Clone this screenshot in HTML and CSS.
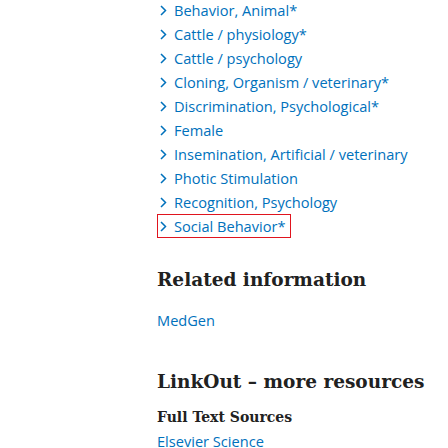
FILE: index.html
```html
<!DOCTYPE html>
<html>
<head>
<meta charset="utf-8">
<link rel="stylesheet" href="styles.css">
</head>
<body>
<div class="page">
  <ul class="terms">
    <li><span class="chev"><svg width="7" height="11" viewBox="0 0 7 11"><path d="M1 1l4.5 4.5L1 10" fill="none" stroke="#0071bc" stroke-width="1.5"/></svg></span><a class="term">Behavior, Animal*</a></li>
    <li><span class="chev"><svg width="7" height="11" viewBox="0 0 7 11"><path d="M1 1l4.5 4.5L1 10" fill="none" stroke="#0071bc" stroke-width="1.5"/></svg></span><a class="term">Cattle / physiology*</a></li>
    <li><span class="chev"><svg width="7" height="11" viewBox="0 0 7 11"><path d="M1 1l4.5 4.5L1 10" fill="none" stroke="#0071bc" stroke-width="1.5"/></svg></span><a class="term">Cattle / psychology</a></li>
    <li><span class="chev"><svg width="7" height="11" viewBox="0 0 7 11"><path d="M1 1l4.5 4.5L1 10" fill="none" stroke="#0071bc" stroke-width="1.5"/></svg></span><a class="term">Cloning, Organism / veterinary*</a></li>
    <li><span class="chev"><svg width="7" height="11" viewBox="0 0 7 11"><path d="M1 1l4.5 4.5L1 10" fill="none" stroke="#0071bc" stroke-width="1.5"/></svg></span><a class="term">Discrimination, Psychological*</a></li>
    <li><span class="chev"><svg width="7" height="11" viewBox="0 0 7 11"><path d="M1 1l4.5 4.5L1 10" fill="none" stroke="#0071bc" stroke-width="1.5"/></svg></span><a class="term">Female</a></li>
    <li><span class="chev"><svg width="7" height="11" viewBox="0 0 7 11"><path d="M1 1l4.5 4.5L1 10" fill="none" stroke="#0071bc" stroke-width="1.5"/></svg></span><a class="term">Insemination, Artificial / veterinary</a></li>
    <li><span class="chev"><svg width="7" height="11" viewBox="0 0 7 11"><path d="M1 1l4.5 4.5L1 10" fill="none" stroke="#0071bc" stroke-width="1.5"/></svg></span><a class="term">Photic Stimulation</a></li>
    <li><span class="chev"><svg width="7" height="11" viewBox="0 0 7 11"><path d="M1 1l4.5 4.5L1 10" fill="none" stroke="#0071bc" stroke-width="1.5"/></svg></span><a class="term">Recognition, Psychology</a></li>
    <li class="focused"><span class="chev"><svg width="7" height="11" viewBox="0 0 7 11"><path d="M1 1l4.5 4.5L1 10" fill="none" stroke="#0071bc" stroke-width="1.5"/></svg></span><a class="term">Social Behavior*</a></li>
  </ul>

  <section class="related">
    <h2 class="heading">Related information</h2>
    <a class="link">MedGen</a>
  </section>

  <section class="linkout">
    <h2 class="heading">LinkOut – more resources</h2>
    <h3 class="subheading">Full Text Sources</h3>
    <a class="link">Elsevier Science</a>
  </section>
</div>
</body>
</html>
```

FILE: styles.css
```css
html, body {
  margin: 0;
  padding: 0;
  background: #fff;
}
.page {
  padding-left: 157px;
  margin-top: -2px;
  font-family: "Open Sans", "Noto Sans", sans-serif;
}
.terms {
  list-style: none;
  margin: 0;
  padding: 0;
}
.terms li {
  display: flex;
  align-items: center;
  height: 24px;
  font-size: 14.6px;
  line-height: 24px;
  width: max-content;
  padding-right: 6px;
}
.term {
  color: #0071bc;
}
.chev {
  display: flex;
  width: 14px;
  padding-left: 3px;
}
.terms li.focused {
  outline: 1px solid #e0141e;
  outline-offset: -1px;
}
.heading {
  font-family: "DejaVu Serif", serif;
  font-weight: bold;
  font-size: 18.5px;
  color: #212121;
  margin: 0;
  line-height: 28px;
}
.related {
  margin-top: 28px;
}
.link {
  display: block;
  color: #0071bc;
  font-size: 14.6px;
  line-height: 24px;
  margin-top: 14px;
}
.linkout {
  margin-top: 36px;
}
.subheading {
  font-family: "DejaVu Serif", serif;
  font-weight: bold;
  font-size: 14px;
  color: #212121;
  margin: 10px 0 0;
  line-height: 22px;
}
.linkout .link {
  margin-top: 1px;
}
```
